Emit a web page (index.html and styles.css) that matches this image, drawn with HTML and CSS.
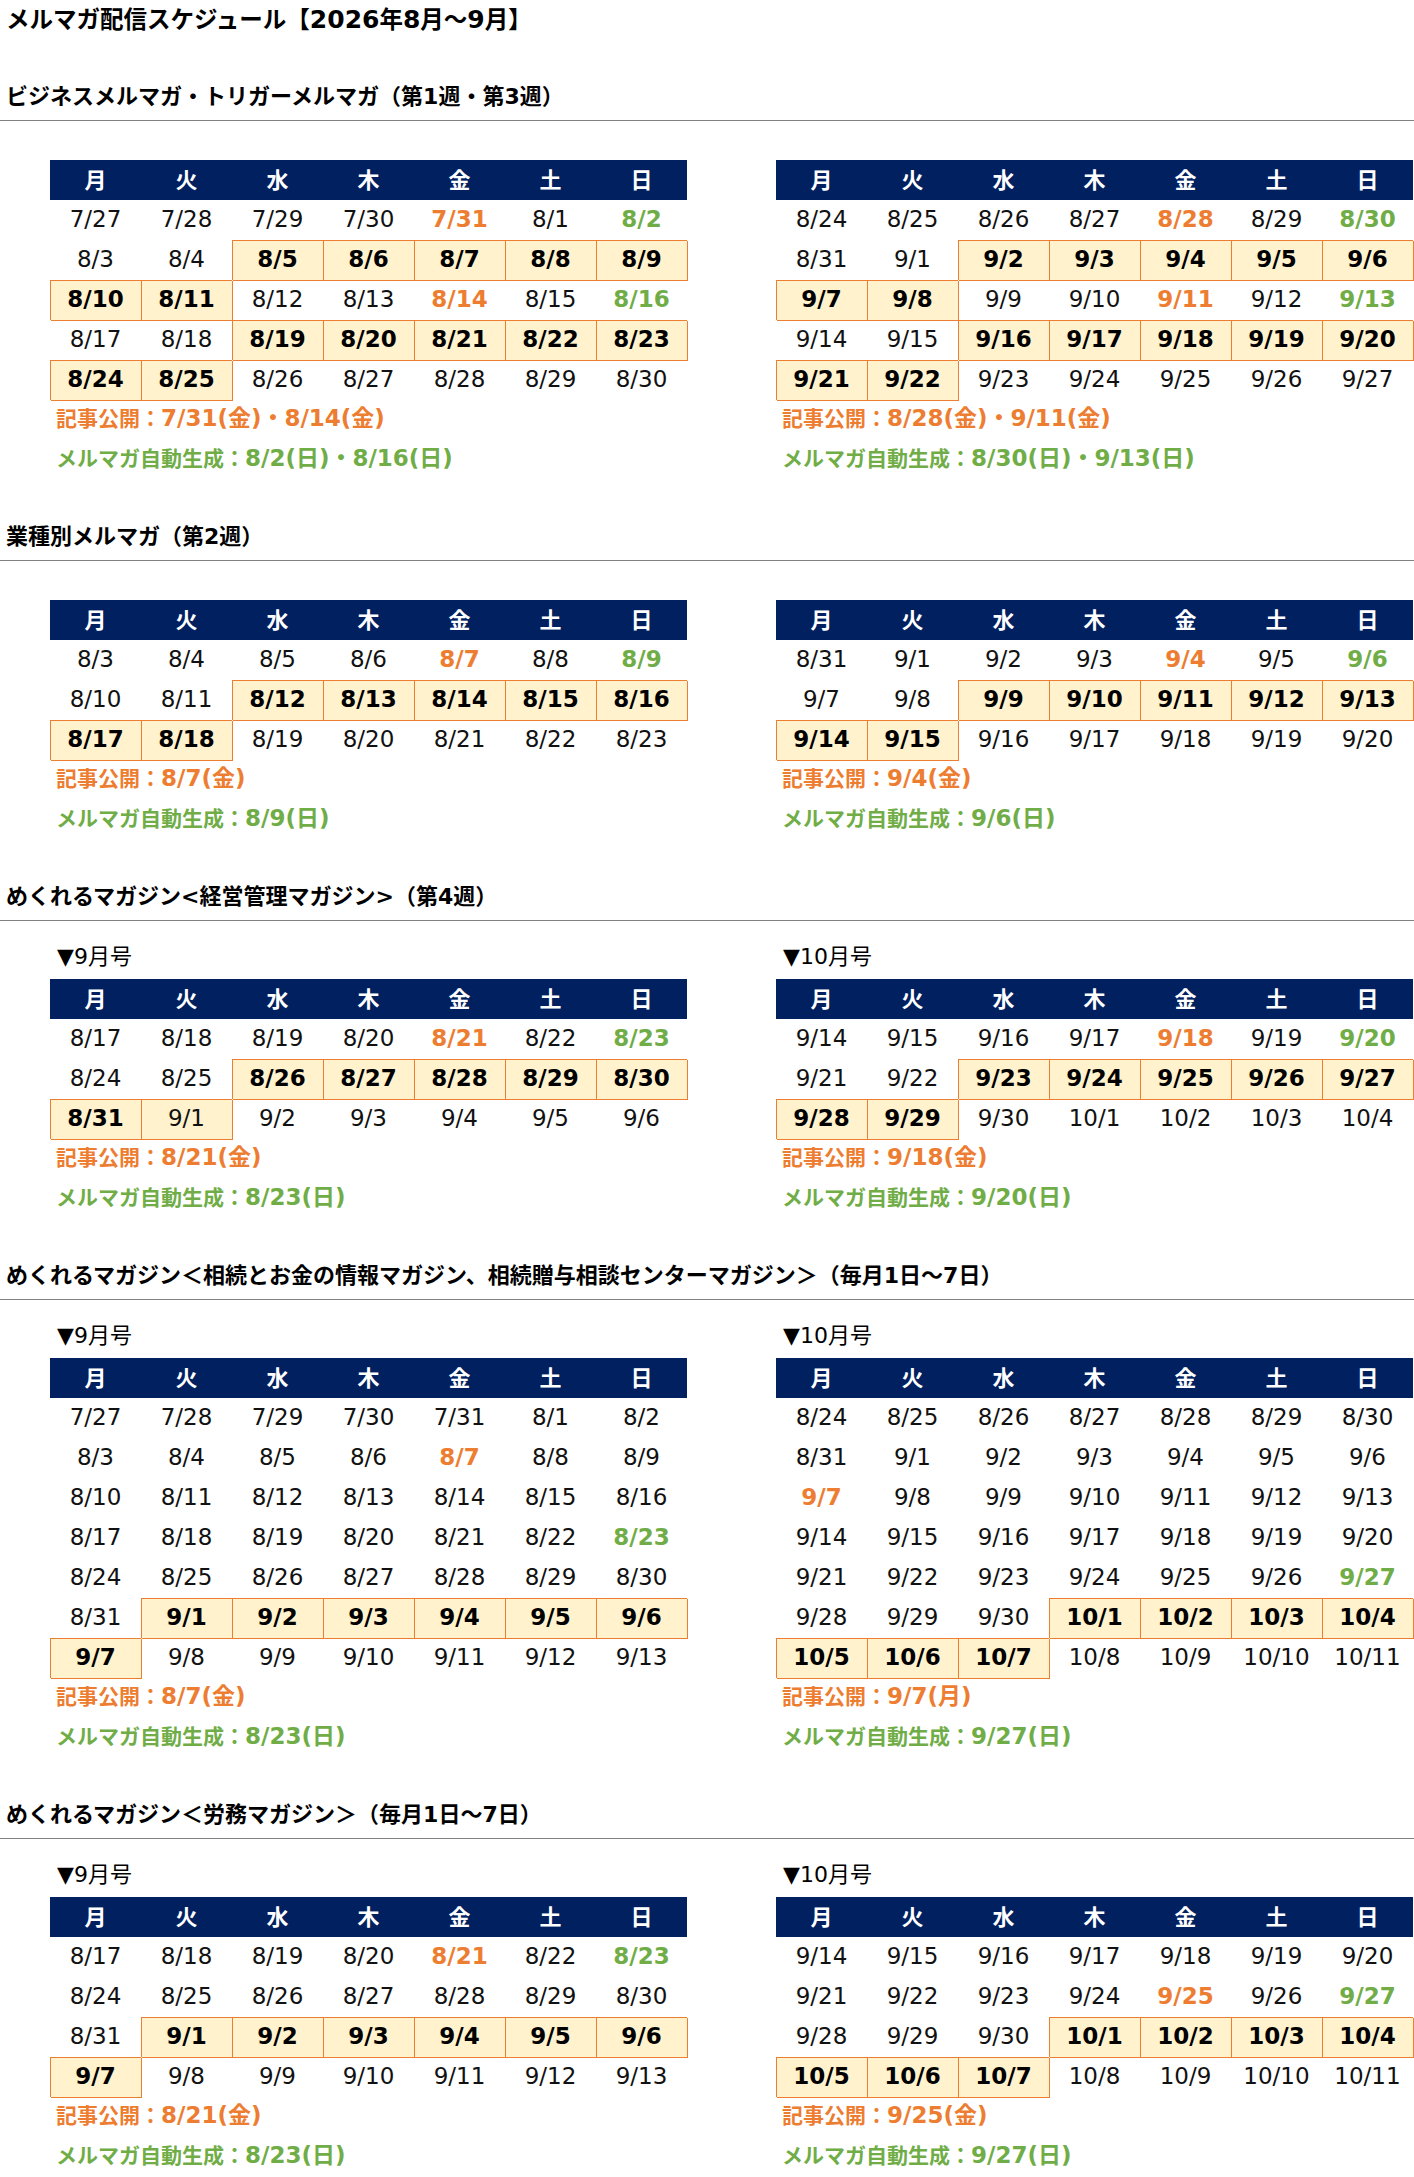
FILE: index.html
```html
<!DOCTYPE html>
<html lang="ja">
<head>
<meta charset="utf-8">
<title>メルマガ配信スケジュール</title>
<link rel="stylesheet" href="styles.css">
</head>
<body>
<h1 class="page-title">メルマガ配信スケジュール【<span class="num">2026</span>年<span class="num">8</span>月～<span class="num">9</span>月】</h1>

<section class="sec">
  <h2 class="sec-title">ビジネスメルマガ・トリガーメルマガ（第1週・第3週）</h2>
  <div class="pair">
    <div class="cal">
      <table class="cal-table">
        <thead><tr><th>月</th><th>火</th><th>水</th><th>木</th><th>金</th><th>土</th><th>日</th></tr></thead>
        <tbody>
          <tr><td>7/27</td><td>7/28</td><td>7/29</td><td>7/30</td><td class="pub">7/31</td><td>8/1</td><td class="gen">8/2</td></tr>
          <tr><td>8/3</td><td>8/4</td><td class="hl">8/5</td><td class="hl">8/6</td><td class="hl">8/7</td><td class="hl">8/8</td><td class="hl">8/9</td></tr>
          <tr><td class="hl">8/10</td><td class="hl">8/11</td><td>8/12</td><td>8/13</td><td class="pub">8/14</td><td>8/15</td><td class="gen">8/16</td></tr>
          <tr><td>8/17</td><td>8/18</td><td class="hl">8/19</td><td class="hl">8/20</td><td class="hl">8/21</td><td class="hl">8/22</td><td class="hl">8/23</td></tr>
          <tr><td class="hl">8/24</td><td class="hl">8/25</td><td>8/26</td><td>8/27</td><td>8/28</td><td>8/29</td><td>8/30</td></tr>
        </tbody>
      </table>
      <p class="note note-pub"><span class="lbl">記事公開：</span>7/31(金)・8/14(金)</p>
      <p class="note note-gen"><span class="lbl">メルマガ自動生成：</span>8/2(日)・8/16(日)</p>
    </div>
    <div class="cal">
      <table class="cal-table">
        <thead><tr><th>月</th><th>火</th><th>水</th><th>木</th><th>金</th><th>土</th><th>日</th></tr></thead>
        <tbody>
          <tr><td>8/24</td><td>8/25</td><td>8/26</td><td>8/27</td><td class="pub">8/28</td><td>8/29</td><td class="gen">8/30</td></tr>
          <tr><td>8/31</td><td>9/1</td><td class="hl">9/2</td><td class="hl">9/3</td><td class="hl">9/4</td><td class="hl">9/5</td><td class="hl">9/6</td></tr>
          <tr><td class="hl">9/7</td><td class="hl">9/8</td><td>9/9</td><td>9/10</td><td class="pub">9/11</td><td>9/12</td><td class="gen">9/13</td></tr>
          <tr><td>9/14</td><td>9/15</td><td class="hl">9/16</td><td class="hl">9/17</td><td class="hl">9/18</td><td class="hl">9/19</td><td class="hl">9/20</td></tr>
          <tr><td class="hl">9/21</td><td class="hl">9/22</td><td>9/23</td><td>9/24</td><td>9/25</td><td>9/26</td><td>9/27</td></tr>
        </tbody>
      </table>
      <p class="note note-pub"><span class="lbl">記事公開：</span>8/28(金)・9/11(金)</p>
      <p class="note note-gen"><span class="lbl">メルマガ自動生成：</span>8/30(日)・9/13(日)</p>
    </div>
  </div>
</section>

<section class="sec">
  <h2 class="sec-title">業種別メルマガ（第2週）</h2>
  <div class="pair">
    <div class="cal">
      <table class="cal-table">
        <thead><tr><th>月</th><th>火</th><th>水</th><th>木</th><th>金</th><th>土</th><th>日</th></tr></thead>
        <tbody>
          <tr><td>8/3</td><td>8/4</td><td>8/5</td><td>8/6</td><td class="pub">8/7</td><td>8/8</td><td class="gen">8/9</td></tr>
          <tr><td>8/10</td><td>8/11</td><td class="hl">8/12</td><td class="hl">8/13</td><td class="hl">8/14</td><td class="hl">8/15</td><td class="hl">8/16</td></tr>
          <tr><td class="hl">8/17</td><td class="hl">8/18</td><td>8/19</td><td>8/20</td><td>8/21</td><td>8/22</td><td>8/23</td></tr>
        </tbody>
      </table>
      <p class="note note-pub"><span class="lbl">記事公開：</span>8/7(金)</p>
      <p class="note note-gen"><span class="lbl">メルマガ自動生成：</span>8/9(日)</p>
    </div>
    <div class="cal">
      <table class="cal-table">
        <thead><tr><th>月</th><th>火</th><th>水</th><th>木</th><th>金</th><th>土</th><th>日</th></tr></thead>
        <tbody>
          <tr><td>8/31</td><td>9/1</td><td>9/2</td><td>9/3</td><td class="pub">9/4</td><td>9/5</td><td class="gen">9/6</td></tr>
          <tr><td>9/7</td><td>9/8</td><td class="hl">9/9</td><td class="hl">9/10</td><td class="hl">9/11</td><td class="hl">9/12</td><td class="hl">9/13</td></tr>
          <tr><td class="hl">9/14</td><td class="hl">9/15</td><td>9/16</td><td>9/17</td><td>9/18</td><td>9/19</td><td>9/20</td></tr>
        </tbody>
      </table>
      <p class="note note-pub"><span class="lbl">記事公開：</span>9/4(金)</p>
      <p class="note note-gen"><span class="lbl">メルマガ自動生成：</span>9/6(日)</p>
    </div>
  </div>
</section>

<section class="sec">
  <h2 class="sec-title">めくれるマガジン&lt;経営管理マガジン&gt;（第4週）</h2>
  <div class="pair">
    <div class="cal">
      <p class="issue">▼9月号</p>
      <table class="cal-table">
        <thead><tr><th>月</th><th>火</th><th>水</th><th>木</th><th>金</th><th>土</th><th>日</th></tr></thead>
        <tbody>
          <tr><td>8/17</td><td>8/18</td><td>8/19</td><td>8/20</td><td class="pub">8/21</td><td>8/22</td><td class="gen">8/23</td></tr>
          <tr><td>8/24</td><td>8/25</td><td class="hl">8/26</td><td class="hl">8/27</td><td class="hl">8/28</td><td class="hl">8/29</td><td class="hl">8/30</td></tr>
          <tr><td class="hl">8/31</td><td class="hl thin">9/1</td><td>9/2</td><td>9/3</td><td>9/4</td><td>9/5</td><td>9/6</td></tr>
        </tbody>
      </table>
      <p class="note note-pub"><span class="lbl">記事公開：</span>8/21(金)</p>
      <p class="note note-gen"><span class="lbl">メルマガ自動生成：</span>8/23(日)</p>
    </div>
    <div class="cal">
      <p class="issue">▼10月号</p>
      <table class="cal-table">
        <thead><tr><th>月</th><th>火</th><th>水</th><th>木</th><th>金</th><th>土</th><th>日</th></tr></thead>
        <tbody>
          <tr><td>9/14</td><td>9/15</td><td>9/16</td><td>9/17</td><td class="pub">9/18</td><td>9/19</td><td class="gen">9/20</td></tr>
          <tr><td>9/21</td><td>9/22</td><td class="hl">9/23</td><td class="hl">9/24</td><td class="hl">9/25</td><td class="hl">9/26</td><td class="hl">9/27</td></tr>
          <tr><td class="hl">9/28</td><td class="hl">9/29</td><td>9/30</td><td>10/1</td><td>10/2</td><td>10/3</td><td>10/4</td></tr>
        </tbody>
      </table>
      <p class="note note-pub"><span class="lbl">記事公開：</span>9/18(金)</p>
      <p class="note note-gen"><span class="lbl">メルマガ自動生成：</span>9/20(日)</p>
    </div>
  </div>
</section>

<section class="sec">
  <h2 class="sec-title">めくれるマガジン＜相続とお金の情報マガジン、相続贈与相談センターマガジン＞（毎月1日～7日）</h2>
  <div class="pair">
    <div class="cal">
      <p class="issue">▼9月号</p>
      <table class="cal-table">
        <thead><tr><th>月</th><th>火</th><th>水</th><th>木</th><th>金</th><th>土</th><th>日</th></tr></thead>
        <tbody>
          <tr><td>7/27</td><td>7/28</td><td>7/29</td><td>7/30</td><td>7/31</td><td>8/1</td><td>8/2</td></tr>
          <tr><td>8/3</td><td>8/4</td><td>8/5</td><td>8/6</td><td class="pub">8/7</td><td>8/8</td><td>8/9</td></tr>
          <tr><td>8/10</td><td>8/11</td><td>8/12</td><td>8/13</td><td>8/14</td><td>8/15</td><td>8/16</td></tr>
          <tr><td>8/17</td><td>8/18</td><td>8/19</td><td>8/20</td><td>8/21</td><td>8/22</td><td class="gen">8/23</td></tr>
          <tr><td>8/24</td><td>8/25</td><td>8/26</td><td>8/27</td><td>8/28</td><td>8/29</td><td>8/30</td></tr>
          <tr><td>8/31</td><td class="hl">9/1</td><td class="hl">9/2</td><td class="hl">9/3</td><td class="hl">9/4</td><td class="hl">9/5</td><td class="hl">9/6</td></tr>
          <tr><td class="hl">9/7</td><td>9/8</td><td>9/9</td><td>9/10</td><td>9/11</td><td>9/12</td><td>9/13</td></tr>
        </tbody>
      </table>
      <p class="note note-pub"><span class="lbl">記事公開：</span>8/7(金)</p>
      <p class="note note-gen"><span class="lbl">メルマガ自動生成：</span>8/23(日)</p>
    </div>
    <div class="cal">
      <p class="issue">▼10月号</p>
      <table class="cal-table">
        <thead><tr><th>月</th><th>火</th><th>水</th><th>木</th><th>金</th><th>土</th><th>日</th></tr></thead>
        <tbody>
          <tr><td>8/24</td><td>8/25</td><td>8/26</td><td>8/27</td><td>8/28</td><td>8/29</td><td>8/30</td></tr>
          <tr><td>8/31</td><td>9/1</td><td>9/2</td><td>9/3</td><td>9/4</td><td>9/5</td><td>9/6</td></tr>
          <tr><td class="pub">9/7</td><td>9/8</td><td>9/9</td><td>9/10</td><td>9/11</td><td>9/12</td><td>9/13</td></tr>
          <tr><td>9/14</td><td>9/15</td><td>9/16</td><td>9/17</td><td>9/18</td><td>9/19</td><td>9/20</td></tr>
          <tr><td>9/21</td><td>9/22</td><td>9/23</td><td>9/24</td><td>9/25</td><td>9/26</td><td class="gen">9/27</td></tr>
          <tr><td>9/28</td><td>9/29</td><td>9/30</td><td class="hl">10/1</td><td class="hl">10/2</td><td class="hl">10/3</td><td class="hl">10/4</td></tr>
          <tr><td class="hl">10/5</td><td class="hl">10/6</td><td class="hl">10/7</td><td>10/8</td><td>10/9</td><td>10/10</td><td>10/11</td></tr>
        </tbody>
      </table>
      <p class="note note-pub"><span class="lbl">記事公開：</span>9/7(月)</p>
      <p class="note note-gen"><span class="lbl">メルマガ自動生成：</span>9/27(日)</p>
    </div>
  </div>
</section>

<section class="sec">
  <h2 class="sec-title">めくれるマガジン＜労務マガジン＞（毎月1日～7日）</h2>
  <div class="pair">
    <div class="cal">
      <p class="issue">▼9月号</p>
      <table class="cal-table">
        <thead><tr><th>月</th><th>火</th><th>水</th><th>木</th><th>金</th><th>土</th><th>日</th></tr></thead>
        <tbody>
          <tr><td>8/17</td><td>8/18</td><td>8/19</td><td>8/20</td><td class="pub">8/21</td><td>8/22</td><td class="gen">8/23</td></tr>
          <tr><td>8/24</td><td>8/25</td><td>8/26</td><td>8/27</td><td>8/28</td><td>8/29</td><td>8/30</td></tr>
          <tr><td>8/31</td><td class="hl">9/1</td><td class="hl">9/2</td><td class="hl">9/3</td><td class="hl">9/4</td><td class="hl">9/5</td><td class="hl">9/6</td></tr>
          <tr><td class="hl">9/7</td><td>9/8</td><td>9/9</td><td>9/10</td><td>9/11</td><td>9/12</td><td>9/13</td></tr>
        </tbody>
      </table>
      <p class="note note-pub"><span class="lbl">記事公開：</span>8/21(金)</p>
      <p class="note note-gen"><span class="lbl">メルマガ自動生成：</span>8/23(日)</p>
    </div>
    <div class="cal">
      <p class="issue">▼10月号</p>
      <table class="cal-table">
        <thead><tr><th>月</th><th>火</th><th>水</th><th>木</th><th>金</th><th>土</th><th>日</th></tr></thead>
        <tbody>
          <tr><td>9/14</td><td>9/15</td><td>9/16</td><td>9/17</td><td>9/18</td><td>9/19</td><td>9/20</td></tr>
          <tr><td>9/21</td><td>9/22</td><td>9/23</td><td>9/24</td><td class="pub">9/25</td><td>9/26</td><td class="gen">9/27</td></tr>
          <tr><td>9/28</td><td>9/29</td><td>9/30</td><td class="hl">10/1</td><td class="hl">10/2</td><td class="hl">10/3</td><td class="hl">10/4</td></tr>
          <tr><td class="hl">10/5</td><td class="hl">10/6</td><td class="hl">10/7</td><td>10/8</td><td>10/9</td><td>10/10</td><td>10/11</td></tr>
        </tbody>
      </table>
      <p class="note note-pub"><span class="lbl">記事公開：</span>9/25(金)</p>
      <p class="note note-gen"><span class="lbl">メルマガ自動生成：</span>9/27(日)</p>
    </div>
  </div>
</section>
</body>
</html>
```

FILE: styles.css
```css
html, body {
  margin: 0;
  padding: 0;
  background: #ffffff;
}

body {
  width: 1414px;
  color: #000000;
  font-family: "DejaVu Sans", "Noto Sans CJK JP", sans-serif;
}

.page-title {
  margin: 0;
  padding: 0 0 0 6px;
  height: 36px;
  font-size: 23.5px;
  line-height: 36px;
  font-weight: 700;
  font-family: "Noto Sans CJK JP", sans-serif;
  white-space: nowrap;
}

.page-title .num {
  font-family: "DejaVu Sans", sans-serif;
  font-size: 25px;
  line-height: 1;
}

.sec {
  margin-top: 41px;
}

.sec:first-of-type {
  margin-top: 45px;
}

.sec-title {
  margin: 0;
  padding: 0 0 7px 6px;
  height: 32px;
  font-size: 22px;
  line-height: 32px;
  font-weight: 700;
  border-bottom: 1px solid #808080;
  white-space: nowrap;
}

.pair {
  display: flex;
  gap: 89px;
  padding-left: 50px;
  margin-top: 39px;
}

.cal {
  width: 637px;
  flex: 0 0 637px;
}

.issue {
  margin: -15px 0 10px 0;
  padding-left: 7px;
  height: 24px;
  font-size: 22px;
  line-height: 24px;
  font-weight: 400;
  white-space: nowrap;
}

.cal-table {
  width: 637px;
  border-collapse: separate;
  border-spacing: 0;
  table-layout: fixed;
}

.cal-table th,
.cal-table td {
  width: 91px;
  height: 40px;
  padding: 0;
  border: 0;
  text-align: center;
  vertical-align: middle;
  box-sizing: border-box;
}

.cal-table th {
  padding-bottom: 4px;
  background: #002060;
  color: #ffffff;
  font-size: 22px;
  font-weight: 700;
  font-family: "Noto Sans CJK JP", sans-serif;
  line-height: 24px;
}

.cal-table td {
  padding-bottom: 2px;
  font-size: 23px;
  line-height: 26px;
  font-weight: 400;
  color: #111111;
}

.cal-table td.pub {
  color: #ed7d31;
  font-weight: 700;
}

.cal-table td.gen {
  color: #70ad47;
  font-weight: 700;
}

/* shared 1px orange grid lines: inset draws top/left, outer offset draws right/bottom */
.cal-table td.hl {
  background: #fff2cc;
  box-shadow: inset 1px 1px 0 #ed7d31, 1px 1px 0 #ed7d31;
  font-weight: 700;
  color: #000000;
}

.cal-table td.hl.thin {
  font-weight: 400;
  color: #111111;
}

.note {
  margin: 0;
  padding: 0 0 6px 6px;
  height: 34px;
  font-size: 23px;
  line-height: 34px;
  font-weight: 700;
  white-space: nowrap;
}

.note .lbl {
  font-family: "Noto Sans CJK JP", sans-serif;
  font-size: 21px;
}

.note-pub {
  color: #ed7d31;
}

.note-gen {
  color: #70ad47;
}
```
